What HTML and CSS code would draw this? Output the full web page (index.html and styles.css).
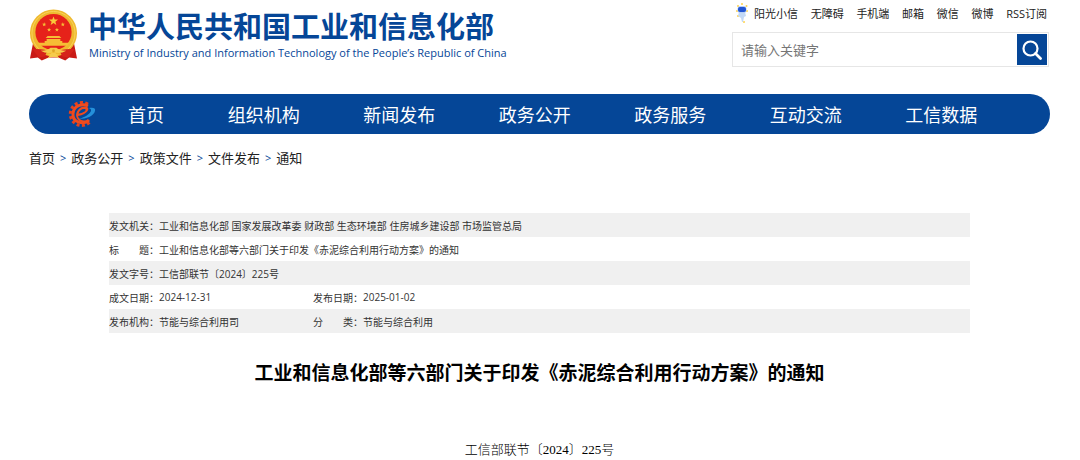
FILE: index.html
```html
<!DOCTYPE html>
<html lang="zh-CN">
<head>
<meta charset="utf-8">
<meta name="viewport" content="width=device-width, initial-scale=1">
<title>工业和信息化部等六部门关于印发《赤泥综合利用行动方案》的通知</title>
<link rel="stylesheet" href="styles.css">
</head>
<body>
<div class="page">
  <header class="header">
    <div class="brand">
      <svg class="emblem" viewBox="0 0 50 54" aria-hidden="true">
        <path fill="#c91a16" d="M4 36 1 51l8-1 4 3 7-3h10l7 3 4-3 8 1-3-15z"/>
        <circle cx="25" cy="25" r="24" fill="#efb92f"/>
        <circle cx="25" cy="25" r="22" fill="none" stroke="#f8d35a" stroke-width="1"/>
        <circle cx="25" cy="24" r="18.500" fill="#e6221a"/>
        <path fill="#f9cb3a" d="m25 8 1.200 3.200 3.400.1-2.700 2.100 1 3.300-2.900-1.900-2.900 1.900 1-3.300-2.700-2.100 3.400-.1z"/>
        <g fill="#f6bd35">
          <path id="star" d="m15.500 14 .6 1.400 1.500.1-1.200 1 .4 1.500-1.300-.8-1.300.8.4-1.500-1.200-1 1.500-.1z"/>
          <use href="#star" x="19"/><use href="#star" x="5" y="5.500"/><use href="#star" x="13" y="5.500"/>
          <path d="M19 28h12l2 2H17zM18 31h14v2H18zM16 33h18v2h7l-2 3H11l-2-3h7z"/>
        </g>
        <path d="M10 39q15 6 30 0l-2 5q-13 6-26 0z" fill="#efb92f"/>
        <path d="M3 41q10 0 16 2l-3 6-6 1zM47 41q-10 0-16 2l3 6 6 1z" fill="#d6221a"/>
        <path d="M12 43q7 0 10-3h6q3 3 10 3-7 4-13 1-6 3-13-1zM19 51l4-6h4l4 6q-6-3-12 0z" fill="#f6cb4b"/>
        <circle cx="25" cy="43" r="1.500" fill="#dfa426"/>
      </svg>
      <div class="names">
        <div class="name">中华人民共和国工业和信息化部</div>
        <div class="name-en">Ministry of Industry and Information Technology of the People’s Republic of China</div>
      </div>
    </div>
    <div class="tools">
      <nav class="quick" aria-label="快捷链接">
        <a class="helper" href="#"><svg class="robot" viewBox="0 0 12 20" aria-hidden="true">
          <g fill="#ffd34c"><circle cx="6" cy="1" r="1"/><circle cx="2" cy="3" r="1"/><circle cx="10.500" cy="3" r="1"/><circle cx="1" cy="8" r="1"/><circle cx="11" cy="8" r="1"/><circle cx="2" cy="13" r="1"/><circle cx="8" cy="19" r="1"/></g>
          <path d="M3 9h6l1 4-2 1-1 5H6l-1-4-3-2z" fill="#c3d9f6"/>
          <rect x="1.500" y="3" width="9" height="7" rx="3" fill="#b7cff5"/>
          <rect x="2" y="4" width="8" height="5" rx="2" fill="#2355d2"/>
        </svg>阳光小信</a>
        <a href="#">无障碍</a><a href="#">手机端</a><a href="#">邮箱</a><a href="#">微信</a><a href="#">微博</a><a href="#">RSS订阅</a>
      </nav>
      <form class="search" role="search">
        <input type="text" placeholder="请输入关键字" aria-label="请输入关键字">
        <button type="button" aria-label="搜索"><svg viewBox="0 0 20 20" aria-hidden="true"><circle cx="8.500" cy="8.500" r="7" fill="none" stroke="#fff" stroke-width="2.200"/><path d="m13.500 13.500 5 5" stroke="#fff" stroke-width="2.800" stroke-linecap="round"/></svg></button>
      </form>
    </div>
  </header>

  <nav class="menu" aria-label="主导航">
    <svg class="gear" viewBox="0 0 30 30" aria-hidden="true">
      <path d="M22.500 23.500A11.500 11.500 0 1 1 22 6" fill="none" stroke="#e8421c" stroke-width="3" stroke-dasharray="3 2.300"/>
      <path d="M22 21C17 26 5 24 6 14.500 7 5 17 5 21 7" fill="none" stroke="#f04b1d" stroke-width="3"/>
      <path d="M22 9c4-1 7 0 6 3-1 5-9 8-16 8 6-2 11-5 12-8 .5-2-1-2.500-2-3z" fill="#2590da"/>
      <path d="M9 16c1-6 5-9 10-8.500 5 1 2 8-8 9.500 1 4 6 5.500 11 4-4 4-12 3-13-5z" fill="#f04b1d"/>
      <path d="M11.500 14.500c1-3 3.500-5 6.500-4.500 2 1-1 4-6.500 4.500z" fill="#054697"/>
    </svg>
    <a class="home" href="#">首页</a>
    <a href="#">组织机构</a><a href="#">新闻发布</a><a href="#">政务公开</a><a href="#">政务服务</a><a href="#">互动交流</a><a href="#">工信数据</a>
  </nav>

  <nav class="crumbs" aria-label="当前位置">
    <a href="#">首页</a><span>&gt;</span><a href="#">政务公开</a><span>&gt;</span><a href="#">政策文件</a><span>&gt;</span><a href="#">文件发布</a><span>&gt;</span><a href="#">通知</a>
  </nav>

  <main class="article">
    <table class="meta">
      <colgroup><col class="c-label"><col class="c-value"><col class="c-label"><col></colgroup>
      <tbody>
        <tr><th scope="row">发文机关：</th><td colspan="3">工业和信息化部 国家发展改革委 财政部 生态环境部 住房城乡建设部 市场监管总局</td></tr>
        <tr><th scope="row">标　　题：</th><td colspan="3">工业和信息化部等六部门关于印发《赤泥综合利用行动方案》的通知</td></tr>
        <tr><th scope="row">发文字号：</th><td colspan="3">工信部联节〔2024〕225号</td></tr>
        <tr><th scope="row">成文日期：</th><td>2024-12-31</td><th scope="row">发布日期：</th><td>2025-01-02</td></tr>
        <tr><th scope="row">发布机构：</th><td>节能与综合利用司</td><th scope="row">分　　类：</th><td>节能与综合利用</td></tr>
      </tbody>
    </table>
    <h1>工业和信息化部等六部门关于印发《赤泥综合利用行动方案》的通知</h1>
    <p class="number">工信部联节〔2024〕225号</p>
  </main>
</div>
</body>
</html>
```

FILE: styles.css
```css
* { box-sizing: border-box; }

body {
  margin: 0;
  background: #fff;
  color: #222;
  font-family: "Open Sans", "Noto Sans CJK SC", sans-serif;
  font-size: 13px;
}

a { color: inherit; text-decoration: none; white-space: nowrap; }

.page { padding: 0 30px 0 29px; }

.header {
  display: flex;
  justify-content: space-between;
  align-items: flex-start;
}

.brand { display: flex; gap: 10px; padding-top: 8px; color: #054697; }
.emblem { width: 49px; height: 54px; flex: none; }
.names { padding-top: 1px; white-space: nowrap; }
.name { font-size: 29px; line-height: 36px; font-weight: 700; }
.name-en { padding-left: 1px; font-family: "Open Sans", sans-serif; font-size: 11px; line-height: 16px; font-weight: 500; }

.tools { width: 317px; margin-right: 1px; }
.quick {
  display: flex;
  justify-content: space-between;
  align-items: center;
  height: 26px;
  padding: 0 2px 0 4px;
  font-size: 11px;
}
.helper { display: flex; align-items: center; gap: 6px; }
.robot { width: 12px; height: 20px; }

.search {
  display: flex;
  margin-top: 6px;
  height: 35px;
  padding: 1px;
  border: 1px solid #e6e6e6;
}
.search input {
  flex: 1;
  min-width: 0;
  padding: 0 7px;
  border: 0;
  outline: 0;
  background: none;
  font: inherit;
}
.search input::placeholder { color: #757575; opacity: 1; }
.search button {
  display: grid;
  place-items: center;
  width: 30px;
  padding: 0;
  border: 0;
  background: #054697;
}
.search button svg { width: 20px; height: 20px; }

.menu {
  display: flex;
  align-items: center;
  height: 40px;
  margin-top: 27px;
  padding: 0 41px 0 38px;
  border-radius: 20px;
  background: #054697;
  color: #fff;
  font-size: 18px;
}
.menu a { flex: 1; text-align: center; }
.menu .home { flex: none; margin: 0 32px 0 31px; }
.gear { width: 30px; height: 30px; flex: none; }

.crumbs { display: flex; gap: 5px; margin-top: 14px; line-height: 20px; }
.crumbs span { color: #054697; font-size: 11px; }

.article { padding: 45px 80px 0; }

.meta {
  width: 100%;
  border-collapse: collapse;
  table-layout: fixed;
  color: #333;
  font-size: 10px;
}
.meta tr { height: 24px; }
.meta tr:nth-child(odd) { background: #f0f0f0; }
.meta th, .meta td { padding: 0; font-weight: 400; text-align: left; white-space: nowrap; }
.c-label { width: 50px; }
.c-value { width: 154px; }

h1 {
  margin: 26px 0 0;
  color: #000;
  font-size: 19px;
  line-height: 28px;
  text-align: center;
}

.number {
  margin: 53px 0 0;
  color: #000;
  font-family: "Liberation Serif", "Noto Sans CJK SC", serif;
  font-weight: 300;
  line-height: 20px;
  text-align: center;
}
```
